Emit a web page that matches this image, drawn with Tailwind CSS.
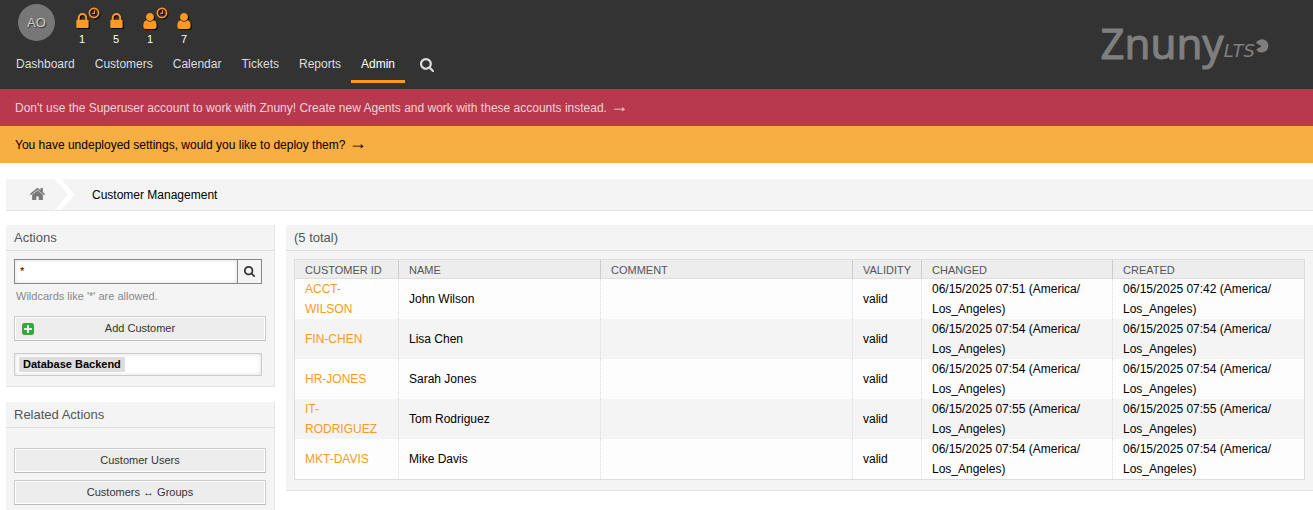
<!DOCTYPE html>
<html lang="en">
<head>
<meta charset="utf-8">
<title>Customer Management - Admin - Znuny</title>
<script src="https://cdn.jsdelivr.net/npm/@tailwindcss/browser@4"></script>
</head>
<body class="bg-white font-['Liberation_Sans',Arial,sans-serif] text-xs text-black overflow-x-hidden">
<svg class="hidden" aria-hidden="true">
  <symbol id="lock" viewBox="0 128 1152 1408"><path d="M320 768h512v-192q0-106-75-181t-181-75-181 75-75 181v192zm832 96v576q0 40-28 68t-68 28h-960q-40 0-68-28t-28-68v-576q0-40 28-68t68-28h32v-192q0-184 132-316t316-132 316 132 132 316v192h32q40 0 68 28t28 68z"/></symbol>
  <symbol id="user" viewBox="256 128 1280 1536"><path d="M1536 1399q0 109-62.5 187t-150.5 78h-854q-88 0-150.5-78t-62.5-187q0-85 8.5-160.5t31.5-152 58.5-131 94-89 134.5-34.5q131 128 313 128t313-128q76 0 134.5 34.5t94 89 58.5 131 31.5 152 8.5 160.5zm-256-887q0 159-112.5 271.5t-271.5 112.5-271.5-112.5-112.5-271.5 112.5-271.5 271.5-112.5 271.5 112.5 112.5 271.5z"/></symbol>
  <symbol id="clock" viewBox="0 0 12 12"><circle cx="6" cy="6" r="4.6" fill="none" stroke="currentColor" stroke-width="1.7"/><path d="M6.5 3.2V6.5H4.2" fill="none" stroke="currentColor" stroke-width="1.1"/></symbol>
  <symbol id="search" viewBox="64 128 1664 1664"><path d="M1216 832q0-185-131.5-316.5t-316.5-131.5-316.5 131.5-131.5 316.5 131.5 316.5 316.5 131.5 316.5-131.5 131.5-316.5zm512 832q0 52-38 90t-90 38q-54 0-90-38l-343-342q-179 124-399 124-143 0-273.5-55.5t-225-150-150-225-55.5-273.5 55.5-273.5 150-225 225-150 273.5-55.5 273.5 55.5 225 150 150 225 55.5 273.5q0 220-124 399l343 343q37 37 37 90z"/></symbol>
  <symbol id="home" viewBox="90 250 1612 1286"><path d="M1472 992v480q0 26-19 45t-45 19h-384v-384h-256v384h-384q-26 0-45-19t-19-45v-480q0-1 .5-3t.5-3l575-474 575 474q1 2 1 6zm223-69l-62 74q-8 9-21 11h-3q-13 0-21-7l-692-577-692 577q-12 8-24 7-13-2-21-11l-62-74q-8-10-7-23.5t11-21.5l719-599q32-26 76-26t76 26l244 204v-195q0-14 9-23t23-9h192q14 0 23 9t9 23v408l219 182q10 8 11 21.5t-7 23.5z"/></symbol>
  <symbol id="plus" viewBox="128 128 1536 1536"><path d="M1408 960v-128q0-26-19-45t-45-19h-320v-320q0-26-19-45t-45-19h-128q-26 0-45 19t-19 45v320h-320q-26 0-45 19t-19 45v128q0 26 19 45t45 19h320v320q0 26 19 45t45 19h128q26 0 45-19t19-45v-320h320q26 0 45-19t19-45zm256-544v960q0 119-84.5 203.5t-203.5 84.5h-960q-119 0-203.5-84.5t-84.5-203.5v-960q0-119 84.5-203.5t203.5-84.5h960q119 0 203.5 84.5t84.5 203.5z"/></symbol>
</svg>

<header class="flex justify-between bg-[#333] h-[89px]">
  <div>
    <div class="flex h-12 pl-[18px] pt-1">
      <a href="#" class="flex items-center justify-center size-[37px] rounded-full bg-[#777] text-[#ccc] text-[13px] [text-shadow:1px_1px_1px_#333]">AO</a>
      <ul class="flex ml-[10px] pt-[9px] text-[11px] text-white">
        <li><a href="#" aria-label="Locked tickets new" class="relative flex flex-col items-center w-[34px]"><svg class="w-[13px] h-[15px] fill-[#ff9922] drop-shadow-[1px_1px_0_#000]"><use href="#lock"/></svg><svg class="absolute left-[23px] -top-[6px] size-3 text-[#ff9922] drop-shadow-[1px_1px_0_#000]"><use href="#clock"/></svg><span class="leading-3 mt-[5px]">1</span></a></li>
        <li><a href="#" aria-label="Locked tickets total" class="flex flex-col items-center w-[34px]"><svg class="w-[13px] h-[15px] fill-[#ff9922] drop-shadow-[1px_1px_0_#000]"><use href="#lock"/></svg><span class="leading-3 mt-[5px]">5</span></a></li>
        <li><a href="#" aria-label="Responsible tickets new" class="relative flex flex-col items-center w-[34px]"><svg class="w-[14px] h-4 fill-[#ff9922] drop-shadow-[1px_1px_0_#000]"><use href="#user"/></svg><svg class="absolute left-[23px] -top-[6px] size-3 text-[#ff9922] drop-shadow-[1px_1px_0_#000]"><use href="#clock"/></svg><span class="leading-3 mt-1">1</span></a></li>
        <li><a href="#" aria-label="Responsible tickets total" class="flex flex-col items-center w-[34px]"><svg class="w-[14px] h-4 fill-[#ff9922] drop-shadow-[1px_1px_0_#000]"><use href="#user"/></svg><span class="leading-3 mt-1">7</span></a></li>
      </ul>
    </div>
    <nav class="flex pl-[6px] text-[#ddd] leading-8">
      <a href="#" class="px-[10px]">Dashboard</a>
      <a href="#" class="px-[10px]">Customers</a>
      <a href="#" class="px-[10px]">Calendar</a>
      <a href="#" class="px-[10px]">Tickets</a>
      <a href="#" class="px-[10px]">Reports</a>
      <a href="#" class="px-[10px] text-white border-b-3 border-[#ff9922]">Admin</a>
      <a href="#" aria-label="Search" class="px-[15px] pt-[10px]"><svg class="size-[14px] fill-[#ddd]"><use href="#search"/></svg></a>
    </nav>
  </div>
  <div class="flex items-start pt-[14px] pr-11 text-[#7f7f7f]" aria-label="Znuny LTS">
    <span class="text-[42px] leading-[57px] font-['Noto_Sans',sans-serif] [-webkit-text-stroke:1px_#7f7f7f]">Znuny</span>
    <span class="text-[18px] leading-6 italic pt-[25px] font-['DejaVu_Sans',sans-serif]">LTS</span>
    <svg class="w-[14px] h-[14px] mt-[25px]" viewBox="0 0 14 14" fill="currentColor"><path d="M6.500 7.200 .9 3.800A6.600 6.600 0 1 1 1.200 10.400Z"/></svg>
  </div>
</header>

<div class="bg-[#b8384d] text-[#f4d3d8] px-[15px] pt-px h-[37px] leading-9"><a href="#">Don't use the Superuser account to work with Znuny! Create new Agents and work with these accounts instead. <span class="text-[18px] leading-none">→</span></a></div>
<div class="bg-[#f7ae42] px-[15px] pt-px h-[37px] leading-9"><a href="#">You have undeployed settings, would you like to deploy them? <span class="text-[18px] leading-none">→</span></a></div>

<nav class="flex mt-4 ml-[6px] h-8 bg-[#f4f4f4] border-b border-[#e5e5e5]" aria-label="Breadcrumb">
  <a href="#" aria-label="Home" class="pl-6 pt-[9px]"><svg class="w-[15px] h-3 fill-[#777]"><use href="#home"/></svg></a>
  <svg class="w-[22px] h-[31px] ml-[9px]" viewBox="0 0 22 31" fill="none" stroke="#fff" stroke-width="5"><path d="M2 -2 17.500 15.500 2 33"/></svg>
  <a href="#" class="pl-4 leading-8">Customer Management</a>
</nav>

<div class="flex items-start gap-[11px] mt-[14px] ml-[6px]">
  <aside class="w-[269px] shrink-0">
    <section class="bg-[#f4f4f4] border-r border-b border-[#e5e5e5] mb-[15px]">
      <h2 class="text-[13px] leading-[25px] px-2 text-[#555] border-b border-[#ddd]">Actions</h2>
      <div class="px-2 pt-2 pb-[10px] text-[11px]">
        <form class="flex w-[248px] h-[25px]">
          <input type="text" value="*" aria-label="Search customers" aria-describedby="hint" class="grow min-w-0 px-[5px] bg-white border border-[#888] shadow-[inset_0_0_4px_#ddd]">
          <button type="button" aria-label="Search" class="flex items-center justify-center w-[25px] -ml-px border border-[#888] bg-[#f4f4f4]"><svg class="size-[11px] fill-[#333]"><use href="#search"/></svg></button>
        </form>
        <p id="hint" class="px-[2px] mt-[5px] leading-[14px] text-[#888]">Wildcards like '*' are allowed.</p>
        <button type="button" class="relative block w-full h-[25px] mt-[13px] border border-[#ccc] border-b-[#bbb] bg-[#ededed] shadow-[inset_0_0_0_1px_#fff] text-[#333]"><svg class="absolute left-[7px] top-[6px] size-3 fill-[#35a839]"><use href="#plus"/></svg>Add Customer</button>
        <div class="flex w-[248px] h-[23px] mt-3 px-1 pt-[3px] bg-white border border-[#ccc] shadow-[inset_0_0_4px_#ddd]" role="listbox" aria-label="Source"><span class="h-[15px] leading-[15px] px-1 bg-[#ddd] font-bold" role="option" aria-selected="true">Database Backend</span></div>
      </div>
    </section>
    <section class="bg-[#f4f4f4] border-r border-b border-[#e5e5e5]">
      <h2 class="text-[13px] leading-[25px] px-2 text-[#555] border-b border-[#ddd]">Related Actions</h2>
      <div class="flex flex-col gap-[7px] px-2 pt-5 pb-[10px] text-[11px] text-[#333]">
        <button type="button" class="h-[25px] border border-[#ccc] border-b-[#bbb] bg-[#ededed] shadow-[inset_0_0_0_1px_#fff]">Customer Users</button>
        <button type="button" class="h-[25px] border border-[#ccc] border-b-[#bbb] bg-[#ededed] shadow-[inset_0_0_0_1px_#fff]">Customers ↔ Groups</button>
      </div>
    </section>
  </aside>

  <main class="grow min-w-0 bg-[#f4f4f4] border-b border-[#e5e5e5]">
    <h2 class="text-[13px] leading-[25px] px-2 text-[#555] border-b border-[#ddd]">(5 total)</h2>
    <div class="px-2 pt-2 pb-[10px]">
      <div class="border border-[#ddd]">
      <table class="w-full table-fixed border-separate border-spacing-0 bg-[#fdfdfd] leading-5">
        <colgroup><col class="w-[104px]"><col class="w-[202px]"><col><col class="w-[69px]"><col class="w-[191px]"><col class="w-[191px]"></colgroup>
        <thead>
          <tr class="bg-[#ededed] text-[11px] leading-4 text-left text-[#555] *:font-normal *:px-[10px] *:pt-[2px] *:pb-0 *:border-b *:border-b-[#ddd] *:not-last:border-r *:not-last:border-r-[#ccc]">
            <th>CUSTOMER ID</th><th>NAME</th><th>COMMENT</th><th>VALIDITY</th><th>CHANGED</th><th>CREATED</th>
          </tr>
        </thead>
        <tbody class="[&_td]:px-[10px] [&_td]:py-0 [&_td:not(:last-child)]:border-r [&_td]:border-dotted [&_td]:border-[#ddd] [&_a]:text-[#ff9922] [&>tr:nth-child(even)]:bg-[#f4f4f4]">
          <tr><td><a href="#">ACCT-<wbr>WILSON</a></td><td>John Wilson</td><td></td><td>valid</td><td>06/15/2025 07:51 (America/<wbr>Los_Angeles)</td><td>06/15/2025 07:42 (America/<wbr>Los_Angeles)</td></tr>
          <tr><td><a href="#">FIN-CHEN</a></td><td>Lisa Chen</td><td></td><td>valid</td><td>06/15/2025 07:54 (America/<wbr>Los_Angeles)</td><td>06/15/2025 07:54 (America/<wbr>Los_Angeles)</td></tr>
          <tr><td><a href="#">HR-JONES</a></td><td>Sarah Jones</td><td></td><td>valid</td><td>06/15/2025 07:54 (America/<wbr>Los_Angeles)</td><td>06/15/2025 07:54 (America/<wbr>Los_Angeles)</td></tr>
          <tr><td><a href="#">IT-<wbr>RODRIGUEZ</a></td><td>Tom Rodriguez</td><td></td><td>valid</td><td>06/15/2025 07:55 (America/<wbr>Los_Angeles)</td><td>06/15/2025 07:55 (America/<wbr>Los_Angeles)</td></tr>
          <tr><td><a href="#">MKT-DAVIS</a></td><td>Mike Davis</td><td></td><td>valid</td><td>06/15/2025 07:54 (America/<wbr>Los_Angeles)</td><td>06/15/2025 07:54 (America/<wbr>Los_Angeles)</td></tr>
        </tbody>
      </table>
      </div>
    </div>
  </main>
</div>
</body>
</html>
